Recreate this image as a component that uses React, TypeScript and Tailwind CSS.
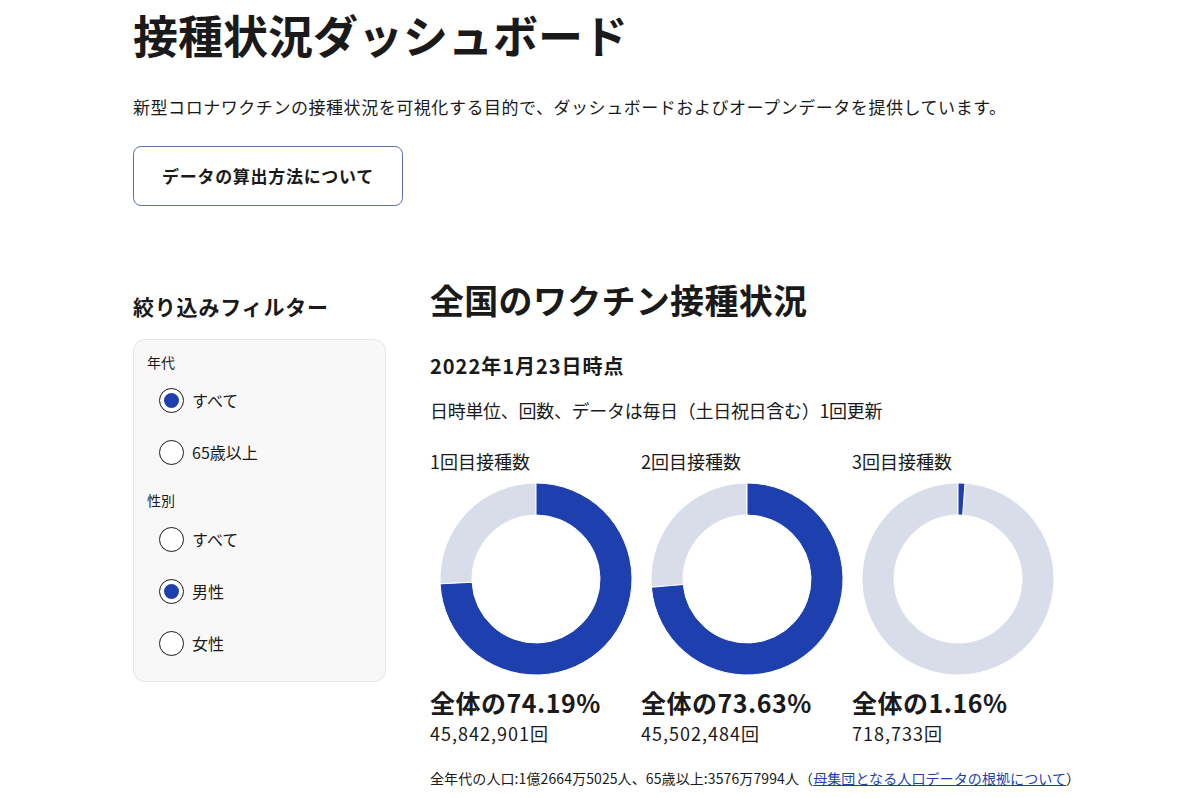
import React from 'react';

const font = { fontFamily: '"Noto Sans CJK JP", "Noto Sans", sans-serif' };

const ageOptions = [
  { label: 'すべて', checked: true },
  { label: '65歳以上', checked: false },
];

const sexOptions = [
  { label: 'すべて', checked: false },
  { label: '男性', checked: true },
  { label: '女性', checked: false },
];

const charts = [
  { title: '1回目接種数', rate: 74.19, count: '45,842,901回' },
  { title: '2回目接種数', rate: 73.63, count: '45,502,484回' },
  { title: '3回目接種数', rate: 1.16, count: '718,733回' },
];

function pt(cx: number, cy: number, r: number, deg: number) {
  const a = (deg * Math.PI) / 180;
  return [cx + r * Math.sin(a), cy - r * Math.cos(a)];
}

function sector(start: number, end: number, outer: number, inner: number) {
  const c = 96;
  const large = end - start > 180 ? 1 : 0;
  const [x1, y1] = pt(c, c, outer, start);
  const [x2, y2] = pt(c, c, outer, end);
  const [x3, y3] = pt(c, c, inner, end);
  const [x4, y4] = pt(c, c, inner, start);
  return `M${x1} ${y1} A${outer} ${outer} 0 ${large} 1 ${x2} ${y2} L${x3} ${y3} A${inner} ${inner} 0 ${large} 0 ${x4} ${y4} Z`;
}

function Donut({ rate }: { rate: number }) {
  const deg = (rate / 100) * 360;
  return (
    <svg width="192" height="192" viewBox="0 0 192 192">
      <path d={sector(deg, 359.99, 96, 64)} fill="#d8dde9" stroke="#ffffff" strokeWidth="1" />
      <path d={sector(0, deg, 96, 64)} fill="#1e3fae" stroke="#ffffff" strokeWidth="1" />
    </svg>
  );
}

function Radio({ label, checked }: { label: string; checked: boolean }) {
  return (
    <label className="ml-3 flex h-10 items-center gap-2">
      <span className="flex h-[25px] w-[25px] items-center justify-center rounded-full border-[1.5px] border-[#1a1a1a] bg-white">
        {checked && <span className="h-[15px] w-[15px] rounded-full bg-[#1e3fae]" />}
      </span>
      <span className="text-base leading-5 text-[#1a1a1a]">{label}</span>
    </label>
  );
}

export default function App() {
  return (
    <div className="min-h-screen bg-white text-[#1a1a1a]" style={font}>
      <div className="mx-auto w-[934px]">
        <h1 className="text-[45px] font-bold leading-[70px]">接種状況ダッシュボード</h1>
        <p className="mt-[23px] text-[17px] leading-7 tracking-[0.55px]">
          新型コロナワクチンの接種状況を可視化する目的で、ダッシュボードおよびオープンデータを提供しています。
        </p>
        <button className="mt-[25px] flex h-[60px] w-[270px] items-center justify-center rounded-lg border border-[#5e6fa8] bg-white text-[17px] font-bold tracking-[0.7px]">
          データの算出方法について
        </button>

        <div className="mt-[70px] flex gap-11">
          <aside className="w-[253px] shrink-0 pt-[15px]">
            <h2 className="text-[21px] font-bold leading-[30px] tracking-[0.8px]">絞り込みフィルター</h2>
            <div className="mt-[18px] rounded-xl border border-[#e6e6e6] bg-[#f8f8f8] pb-[18px] pl-[13px] pt-3">
              <div className="text-sm leading-5">年代</div>
              <div className="mt-2 flex flex-col gap-3">
                {ageOptions.map((o) => (
                  <Radio key={o.label} {...o} />
                ))}
              </div>
              <div className="mt-[18px] text-sm leading-5">性別</div>
              <div className="mt-[9px] flex flex-col gap-3">
                {sexOptions.map((o) => (
                  <Radio key={o.label} {...o} />
                ))}
              </div>
            </div>
          </aside>

          <main className="flex-1">
            <h2 className="text-[34px] font-bold leading-[48px] tracking-[0.3px]">全国のワクチン接種状況</h2>
            <div className="mt-7 text-[20px] font-bold leading-7 tracking-[1px]">2022年1月23日時点</div>
            <p className="mt-[17px] text-[18px] leading-[26px] tracking-[-0.3px]">日時単位、回数、データは毎日（土日祝日含む）1回更新</p>
            <div className="mt-[25px] grid w-[633px] grid-cols-3">
              {charts.map((c) => (
                <div key={c.title}>
                  <div className="text-[18px] leading-[26px]">{c.title}</div>
                  <div className="mt-[9px] flex w-[211px] justify-center">
                    <Donut rate={c.rate} />
                  </div>
                  <div className="mt-[11px] text-[25px] font-bold leading-8 tracking-[0.5px]">全体の{c.rate.toFixed(2)}%</div>
                  <div className="mt-[2px] text-[18px] leading-[26px] tracking-[1px]">{c.count}</div>
                </div>
              ))}
            </div>
            <p className="mt-[22px] whitespace-nowrap text-[14px] leading-5 tracking-[0.1px]">
              全年代の人口:1億2664万5025人、65歳以上:3576万7994人（
              <a href="#" className="text-[#1e3fae] underline">母集団となる人口データの根拠について</a>）
            </p>
          </main>
        </div>
      </div>
    </div>
  );
}
